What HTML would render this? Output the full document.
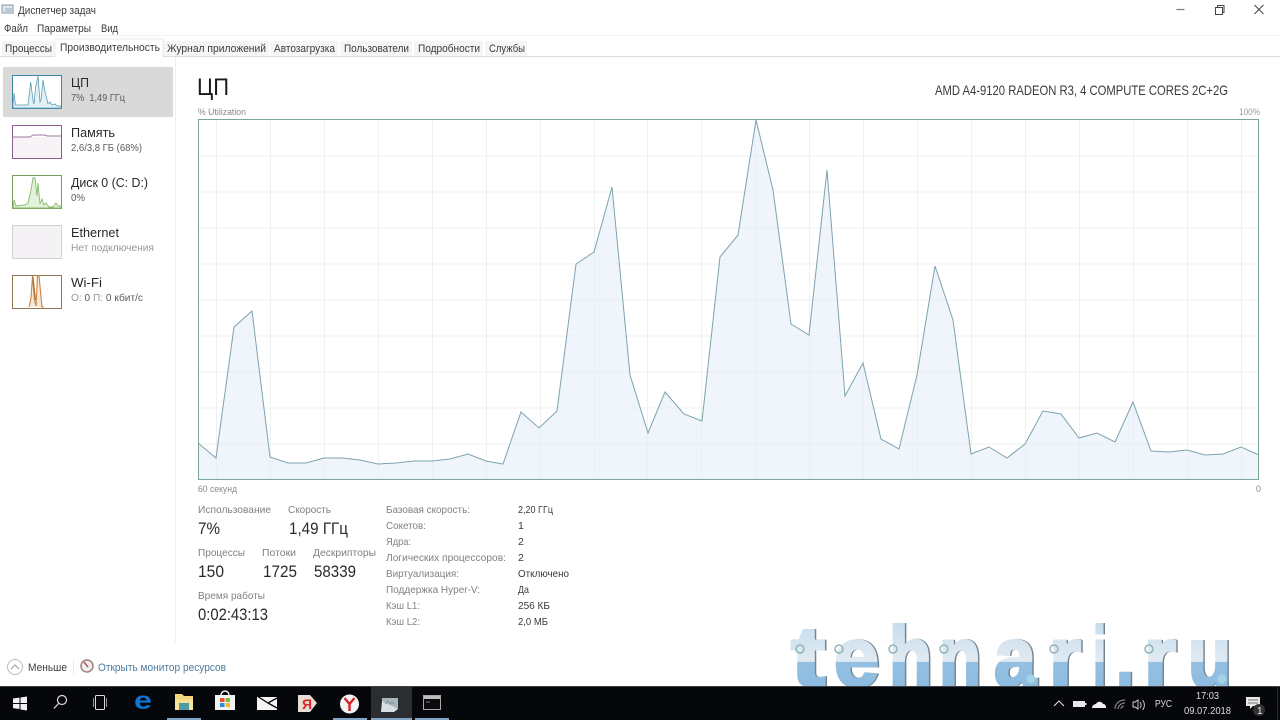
<!DOCTYPE html>
<html lang="ru"><head><meta charset="utf-8"><title>Диспетчер задач</title>
<style>
html,body{margin:0;padding:0;width:1280px;height:720px;overflow:hidden;background:#fff}
svg{display:block;font-family:"Liberation Sans","Noto Sans CJK SC",sans-serif;filter:blur(.35px)}
.d{fill:#3a3a3a;font-size:11px}
.g{fill:#808080;font-size:10.5px}
.n{fill:#2a2a2a;font-size:13px}
.s{fill:#5a5a5a;font-size:10.5px}
.v{fill:#3a3a3a;font-size:10.5px}
.b{fill:#2a2a2a;font-size:17px}
.wm text{font-size:84px;font-weight:700;fill:url(#wm);stroke:url(#wm);stroke-width:3}
</style></head><body>
<svg width="1280" height="720" viewBox="0 0 1280 720" xmlns="http://www.w3.org/2000/svg">
<defs>
<linearGradient id="wm" gradientUnits="userSpaceOnUse" x1="0" y1="620" x2="0" y2="687"><stop offset="0" stop-color="#c4dcee"/><stop offset=".62" stop-color="#e2ebf2"/><stop offset=".63" stop-color="#93c0e2"/><stop offset="1" stop-color="#8dbbdf"/></linearGradient>
<filter id="sh" x="-2%" y="-5%" width="104%" height="110%"><feDropShadow dx="1.500" dy="0" stdDeviation=".3" flood-color="#76858f"/></filter>
</defs>
<rect width="1280" height="720" fill="#fff"/>
<!-- title bar -->
<g><rect x="2" y="5" width="11" height="8" fill="#dfe6ea" stroke="#8c9aa5"/><rect x="5" y="8" width="9" height="6" fill="#b9c8d2"/></g>
<text x="18" y="14" class="d" textLength="78" lengthAdjust="spacingAndGlyphs">Диспетчер задач</text>
<path d="M1176.500 9.500h8" stroke="#777" stroke-width="1.200"/>
<path d="M1215.500 7.500h7v7h-7zM1217.500 7.500v-2h6.500v7h-1.500" fill="none" stroke="#444"/>
<path d="M1254.500 5l9 9M1263.500 5l-9 9" stroke="#444" stroke-width="1"/>
<!-- menu -->
<text x="4" y="32" class="d" textLength="24" lengthAdjust="spacingAndGlyphs">Файл</text>
<text x="37" y="32" class="d" textLength="54" lengthAdjust="spacingAndGlyphs">Параметры</text>
<text x="101" y="32" class="d" textLength="17" lengthAdjust="spacingAndGlyphs">Вид</text>
<rect y="35" width="1280" height="1" fill="#f3f3f3"/>
<!-- tabs -->
<rect y="56" width="1280" height="1" fill="#dcdcdc"/>
<g fill="#f5f5f5">
<rect x="2" y="41" width="52" height="15"/><rect x="163" y="41" width="106" height="15"/><rect x="270" y="41" width="68" height="15"/><rect x="340" y="41" width="72" height="15"/><rect x="414" y="41" width="69" height="15"/><rect x="485" y="41" width="42" height="15"/>
</g>
<rect x="55" y="39" width="108" height="18" fill="#fff"/>
<path d="M55 57V39h108v17" fill="none" stroke="#e8e8e8"/>
<g>
<text x="5" y="52" class="d" textLength="47" lengthAdjust="spacingAndGlyphs">Процессы</text>
<text x="60" y="51" class="d" textLength="100" lengthAdjust="spacingAndGlyphs">Производительность</text>
<text x="167" y="52" class="d" textLength="99" lengthAdjust="spacingAndGlyphs">Журнал приложений</text>
<text x="274" y="52" class="d" textLength="61" lengthAdjust="spacingAndGlyphs">Автозагрузка</text>
<text x="344" y="52" class="d" textLength="65" lengthAdjust="spacingAndGlyphs">Пользователи</text>
<text x="418" y="52" class="d" textLength="62" lengthAdjust="spacingAndGlyphs">Подробности</text>
<text x="489" y="52" class="d" textLength="36" lengthAdjust="spacingAndGlyphs">Службы</text>
</g>
<!-- sidebar -->
<rect x="175" y="57" width="1" height="586" fill="#efefef"/>
<rect x="3" y="67" width="170" height="50" fill="#d9d9d9"/>
<rect x="12.500" y="75.500" width="49" height="33" fill="#fff" stroke="#3f86a8"/>
<path d="M13 108V105L14 93L15.500 105L28 105L30.700 82L33 100L34 104L35.500 88L38 76L40 102L41 100L43 80L45 92L46.700 98L48 104L50 102L52 105L55 104L57 106L61 106V108Z" fill="#e3f1f7" stroke="#5a9db4" stroke-width=".8"/>
<text x="71" y="87" class="n" textLength="18" lengthAdjust="spacingAndGlyphs">ЦП</text>
<text x="71" y="101" class="s" textLength="54" lengthAdjust="spacingAndGlyphs" xml:space="preserve">7%  1,49 ГГц</text>
<rect x="12.500" y="125.500" width="49" height="33" fill="#f7f3f7" stroke="#8b5f8d"/>
<rect x="13" y="126" width="48" height="11" fill="#fff"/>
<path d="M13 137H30L33 135H45L47 136H61" fill="none" stroke="#9a7a9c"/>
<text x="71" y="137" class="n" textLength="44" lengthAdjust="spacingAndGlyphs">Память</text>
<text x="71" y="151" class="s" textLength="71" lengthAdjust="spacingAndGlyphs">2,6/3,8 ГБ (68%)</text>
<rect x="12.500" y="175.500" width="49" height="33" fill="#fff" stroke="#7a9a5e"/>
<path d="M13 208L14 200L16 206L25 205L28 203L31 190L33 178L35 178L37 196L38 183L40 204L42 199L44 205L46 203L49 207L53 207L56 203L58 206L61 206V208Z" fill="#e2f0dc" stroke="#84bd6a" stroke-width=".9"/>
<text x="71" y="187" class="n" textLength="77" lengthAdjust="spacingAndGlyphs">Диск 0 (C: D:)</text>
<text x="71" y="201" class="s" textLength="14" lengthAdjust="spacingAndGlyphs">0%</text>
<rect x="12.500" y="225.500" width="49" height="33" fill="#f4f2f4" stroke="#d2d2d2"/>
<text x="71" y="237" class="n" textLength="48" lengthAdjust="spacingAndGlyphs">Ethernet</text>
<text x="71" y="251" class="s" style="fill:#999" textLength="83" lengthAdjust="spacingAndGlyphs">Нет подключения</text>
<rect x="12.500" y="275.500" width="49" height="33" fill="#fff" stroke="#8f7650"/>
<path d="M29 307L31 298L32.500 276L34.500 300L36 306L37.500 276L39 276L42 307H44" fill="#f8e8da" stroke="#c98546" stroke-width="1.100"/>
<path d="M33 277L35.500 300" fill="none" stroke="#a5682a"/>
<text x="71" y="287" class="n" textLength="31" lengthAdjust="spacingAndGlyphs">Wi-Fi</text>
<text x="71" y="301" class="s" textLength="72" lengthAdjust="spacingAndGlyphs"><tspan fill="#999">О:</tspan> 0 <tspan fill="#999">П:</tspan> 0 кбит/с</text>
<!-- heading -->
<text x="197" y="95" style="font-size:24px" fill="#1a1a1a" textLength="32" lengthAdjust="spacingAndGlyphs">ЦП</text>
<text x="935" y="95" style="font-size:14px" fill="#3a3a3a" textLength="293" lengthAdjust="spacingAndGlyphs">AMD A4-9120 RADEON R3, 4 COMPUTE CORES 2C+2G</text>
<text x="198" y="115" style="font-size:9px" fill="#888" textLength="48" lengthAdjust="spacingAndGlyphs">% Utilization</text>
<text x="1239" y="115" style="font-size:9px" fill="#999" textLength="21" lengthAdjust="spacingAndGlyphs">100%</text>
<!-- graph -->
<g stroke="#eef1f1" stroke-width="1">
<path d="M198 156H1259M198 192H1259M198 228H1259M198 264H1259M198 300H1259M198 336H1259M198 372H1259M198 408H1259M198 444H1259"/>
<path d="M216.500 120V479M270.500 120V479M324.500 120V479M378.500 120V479M432.500 120V479M486.500 120V479M540.500 120V479M594.500 120V479M647.500 120V479M701.500 120V479M755.500 120V479M809.500 120V479M863.500 120V479M917.500 120V479M971.500 120V479M1025.500 120V479M1079.500 120V479M1133.500 120V479M1187.500 120V479M1241.500 120V479"/>
</g>
<path fill="#e4eff8" fill-opacity=".6" d="M198 479V443L216 458L234 327L252 311L270 457L288 463L306 463L324 458L342 458L360 460L378 464L396 463L414 461L432 461L450 459L468 454L486 461L503 464L521 412L539 428L557 411L576 264L594 252L612 187L630 375L648 433L665 392L684 414L702 421L720 257L738 235L756 120L773 190L791 324L809 335L827 170L845 396L863 363L881 439L899 449L917 375L935 266L953 320L971 454L989 447L1007 458L1025 444L1043 411L1061 414L1079 438L1097 433L1115 442L1133 402L1151 451L1169 452L1187 450L1205 455L1223 454L1241 447L1259 455V479Z"/>
<polyline fill="none" stroke="#7ea3ae" stroke-width="1" points="198,443 216,458 234,327 252,311 270,457 288,463 306,463 324,458 342,458 360,460 378,464 396,463 414,461 432,461 450,459 468,454 486,461 503,464 521,412 539,428 557,411 576,264 594,252 612,187 630,375 648,433 665,392 684,414 702,421 720,257 738,235 756,120 773,190 791,324 809,335 827,170 845,396 863,363 881,439 899,449 917,375 935,266 953,320 971,454 989,447 1007,458 1025,444 1043,411 1061,414 1079,438 1097,433 1115,442 1133,402 1151,451 1169,452 1187,450 1205,455 1223,454 1241,447 1259,455"/>
<rect x="198.500" y="119.500" width="1060" height="360" fill="none" stroke="#7ba597"/>
<text x="198" y="492" style="font-size:9px" fill="#888" textLength="39" lengthAdjust="spacingAndGlyphs">60 секунд</text>
<text x="1256" y="492" style="font-size:9px" fill="#888">0</text>
<!-- stats -->
<text x="198" y="513" class="g" textLength="73" lengthAdjust="spacingAndGlyphs">Использование</text>
<text x="288" y="513" class="g" textLength="43" lengthAdjust="spacingAndGlyphs">Скорость</text>
<text x="198" y="534" class="b" textLength="22" lengthAdjust="spacingAndGlyphs">7%</text>
<text x="289" y="534" class="b" textLength="59" lengthAdjust="spacingAndGlyphs">1,49 ГГц</text>
<text x="198" y="556" class="g" textLength="47" lengthAdjust="spacingAndGlyphs">Процессы</text>
<text x="262" y="556" class="g" textLength="34" lengthAdjust="spacingAndGlyphs">Потоки</text>
<text x="313" y="556" class="g" textLength="63" lengthAdjust="spacingAndGlyphs">Дескрипторы</text>
<text x="198" y="577" class="b" textLength="26" lengthAdjust="spacingAndGlyphs">150</text>
<text x="263" y="577" class="b" textLength="34" lengthAdjust="spacingAndGlyphs">1725</text>
<text x="314" y="577" class="b" textLength="42" lengthAdjust="spacingAndGlyphs">58339</text>
<text x="198" y="599" class="g" textLength="67" lengthAdjust="spacingAndGlyphs">Время работы</text>
<text x="198" y="620" class="b" textLength="70" lengthAdjust="spacingAndGlyphs">0:02:43:13</text>
<text x="386" y="513" class="g" textLength="84" lengthAdjust="spacingAndGlyphs">Базовая скорость:</text>
<text x="386" y="529" class="g" textLength="40" lengthAdjust="spacingAndGlyphs">Сокетов:</text>
<text x="386" y="545" class="g" textLength="25" lengthAdjust="spacingAndGlyphs">Ядра:</text>
<text x="386" y="561" class="g" textLength="120" lengthAdjust="spacingAndGlyphs">Логических процессоров:</text>
<text x="386" y="577" class="g" textLength="73" lengthAdjust="spacingAndGlyphs">Виртуализация:</text>
<text x="386" y="593" class="g" textLength="94" lengthAdjust="spacingAndGlyphs">Поддержка Hyper-V:</text>
<text x="386" y="609" class="g" textLength="34" lengthAdjust="spacingAndGlyphs">Кэш L1:</text>
<text x="386" y="625" class="g" textLength="34" lengthAdjust="spacingAndGlyphs">Кэш L2:</text>
<text x="518" y="513" class="v" textLength="35" lengthAdjust="spacingAndGlyphs">2,20 ГГц</text>
<text x="518" y="529" class="v">1</text>
<text x="518" y="545" class="v">2</text>
<text x="518" y="561" class="v">2</text>
<text x="518" y="577" class="v" textLength="51" lengthAdjust="spacingAndGlyphs">Отключено</text>
<text x="518" y="593" class="v" textLength="11" lengthAdjust="spacingAndGlyphs">Да</text>
<text x="518" y="609" class="v" textLength="32" lengthAdjust="spacingAndGlyphs">256 КБ</text>
<text x="518" y="625" class="v" textLength="30" lengthAdjust="spacingAndGlyphs">2,0 МБ</text>
<!-- footer -->
<circle cx="15" cy="667" r="7.500" fill="#fff" stroke="#bbb"/>
<path d="M11 669l4-4 4 4" fill="none" stroke="#999"/>
<text x="28" y="671" class="d" textLength="39" lengthAdjust="spacingAndGlyphs">Меньше</text>
<rect x="73" y="659" width="1" height="16" fill="#ececec"/>
<circle cx="87" cy="666" r="6" fill="#eee" stroke="#a08080" stroke-width="1.500"/>
<path d="M84 662l4 5" stroke="#c03030" stroke-width="1.200"/>
<text x="98" y="671" style="font-size:11px" fill="#4c7a9c" textLength="128" lengthAdjust="spacingAndGlyphs">Открыть монитор ресурсов</text>
<!-- watermark -->
<g class="wm" filter="url(#sh)">
<text x="791" y="686" textLength="34" lengthAdjust="spacingAndGlyphs">t</text>
<text x="834" y="686" textLength="45" lengthAdjust="spacingAndGlyphs">e</text>
<text x="889" y="686" textLength="43" lengthAdjust="spacingAndGlyphs">h</text>
<text x="939" y="686" textLength="42" lengthAdjust="spacingAndGlyphs">n</text>
<text x="994" y="686" textLength="42" lengthAdjust="spacingAndGlyphs">a</text>
<text x="1049" y="686" textLength="32" lengthAdjust="spacingAndGlyphs">r</text>
<text x="1093" y="686" textLength="13" lengthAdjust="spacingAndGlyphs">i</text>
<text x="1116" y="686" textLength="18" lengthAdjust="spacingAndGlyphs">.</text>
<text x="1144" y="686" textLength="32" lengthAdjust="spacingAndGlyphs">r</text>
<text x="1188" y="686" textLength="43" lengthAdjust="spacingAndGlyphs">u</text>
</g>
<g fill="none" stroke="#8fb5b5" stroke-width="1.500">
<circle cx="800" cy="649" r="4"/><circle cx="839" cy="649" r="4"/><circle cx="893" cy="649" r="4"/><circle cx="944" cy="649" r="4"/><circle cx="1054" cy="649" r="4"/><circle cx="1149" cy="649" r="4"/>
</g>
<g fill="#a5d3e6"><circle cx="1031" cy="679" r="4.500"/><circle cx="1222" cy="679" r="4.500"/></g>
<!-- taskbar -->
<rect y="686" width="1280" height="34" fill="#05070b"/>
<rect y="686" width="1280" height="1" fill="#3c3e42"/>
<rect x="371" y="687" width="41" height="33" fill="#2b2d30"/>
<g fill="#7fa6c8">
<rect x="167" y="718" width="34" height="2"/><rect x="333" y="718" width="34" height="2"/><rect x="371" y="718" width="41" height="2"/><rect x="415" y="718" width="34" height="2"/>
</g>
<path d="M13 698.500l6.500-.9V703H13zM20.500 697.500l6.500-1V703h-6.500zM13 704h6.500v5l-6.500-.9zM20.500 704H27v6.500l-6.500-1z" fill="#f2f2f2"/>
<circle cx="62" cy="700" r="4.500" fill="none" stroke="#ddd" stroke-width="1.200"/><path d="M58.500 703.500l-4.500 5" stroke="#ddd" stroke-width="1.200"/>
<path d="M93.500 698v9M106.500 698v9" stroke="#999"/><rect x="95.500" y="695.500" width="9" height="14" rx="1" fill="none" stroke="#ddd"/>
<text x="134" y="709" style="font-size:25px;font-weight:700" fill="#0f74d4" textLength="18" lengthAdjust="spacingAndGlyphs">e</text>
<path d="M175 694h7l2 2h9v14h-18z" fill="#f2d77e"/><rect x="175" y="700" width="18" height="10" fill="#f6e29a"/><rect x="179" y="703" width="10" height="7" fill="#4f9aa6"/>
<path d="M221 695a4 4 0 0 1 8 0" fill="none" stroke="#eee" stroke-width="1.500"/><rect x="215" y="695" width="20" height="15" fill="#f2f2f2"/>
<rect x="220" y="698" width="4.500" height="4" fill="#e8502a"/><rect x="225.500" y="698" width="4.500" height="4" fill="#7fb83a"/><rect x="220" y="703" width="4.500" height="4" fill="#2d8fdc"/><rect x="225.500" y="703" width="4.500" height="4" fill="#f5b921"/>
<path d="M257 697h20v13h-20z" fill="#f5f5f5"/><path d="M257 696l11 7 9-5M268 703l9 5" fill="none" stroke="#05070b" stroke-width="1.300"/>
<path d="M298 695h12l7 8-7 9h-12z" fill="#e8dcd5"/>
<text x="302" y="709" style="font-size:14px;font-weight:700" fill="#d8262c">Я</text>
<circle cx="349.500" cy="704" r="9.500" fill="#f5f5f5"/><path d="M344.500 698l5 6 5-6M349.500 704v7" fill="none" stroke="#d8232a" stroke-width="2.400"/>
<rect x="382" y="698" width="16" height="11" fill="#a9b5bd"/><path d="M382 701l-1 11h13l4-3" fill="#d9dfe2"/><path d="M385 704l3-3 2 3 2-2 2 2" fill="none" stroke="#7f93a1"/>
<rect x="423.500" y="695.500" width="17" height="14" fill="#0b0b0b" stroke="#a8a8a8"/><rect x="424" y="696" width="16" height="3" fill="#bdbdbd"/><path d="M426 702h4" stroke="#888"/>
<!-- tray -->
<path d="M1054 706l5-5 5 5" fill="none" stroke="#e4e4e4"/>
<rect x="1073" y="701" width="12" height="6" fill="#e8e8e8"/><rect x="1085" y="703" width="1.500" height="2" fill="#e8e8e8"/>
<path d="M1092 708c0-3 3-4 4-4 1-3 6-3 7 0 2 0 3 1 3 4z" fill="#f0f0f0"/>
<path d="M1115 709c0-5 4-9 10-9M1118 709c0-3 3-6 7-6M1121 709c0-2 2-3 3-3" fill="none" stroke="#999"/>
<path d="M1133 702h2l3-2v9l-3-2h-2zM1140 702c1.500 2 1.500 4 0 6M1142.500 700c2.500 3 2.500 7 0 10" fill="none" stroke="#ddd" stroke-width=".9"/>
<text x="1155" y="707" style="fill:#ddd;font-size:10px" textLength="17" lengthAdjust="spacingAndGlyphs">РУС</text>
<text x="1196" y="699" style="fill:#ddd;font-size:10px" textLength="23" lengthAdjust="spacingAndGlyphs">17:03</text>
<text x="1184" y="714" style="fill:#ddd;font-size:10px" textLength="47" lengthAdjust="spacingAndGlyphs">09.07.2018</text>
<path d="M1246 697h14v9h-7l-3 3v-3h-4z" fill="#e8e8e8"/><path d="M1248 700h10M1248 703h10" stroke="#777"/>
<circle cx="1259" cy="710" r="6" fill="#333"/><text x="1257" y="714" style="fill:#eee;font-size:10px">1</text>
<rect x="1277" y="687" width="1" height="33" fill="#2a2c30"/>
</svg>
</body></html>
